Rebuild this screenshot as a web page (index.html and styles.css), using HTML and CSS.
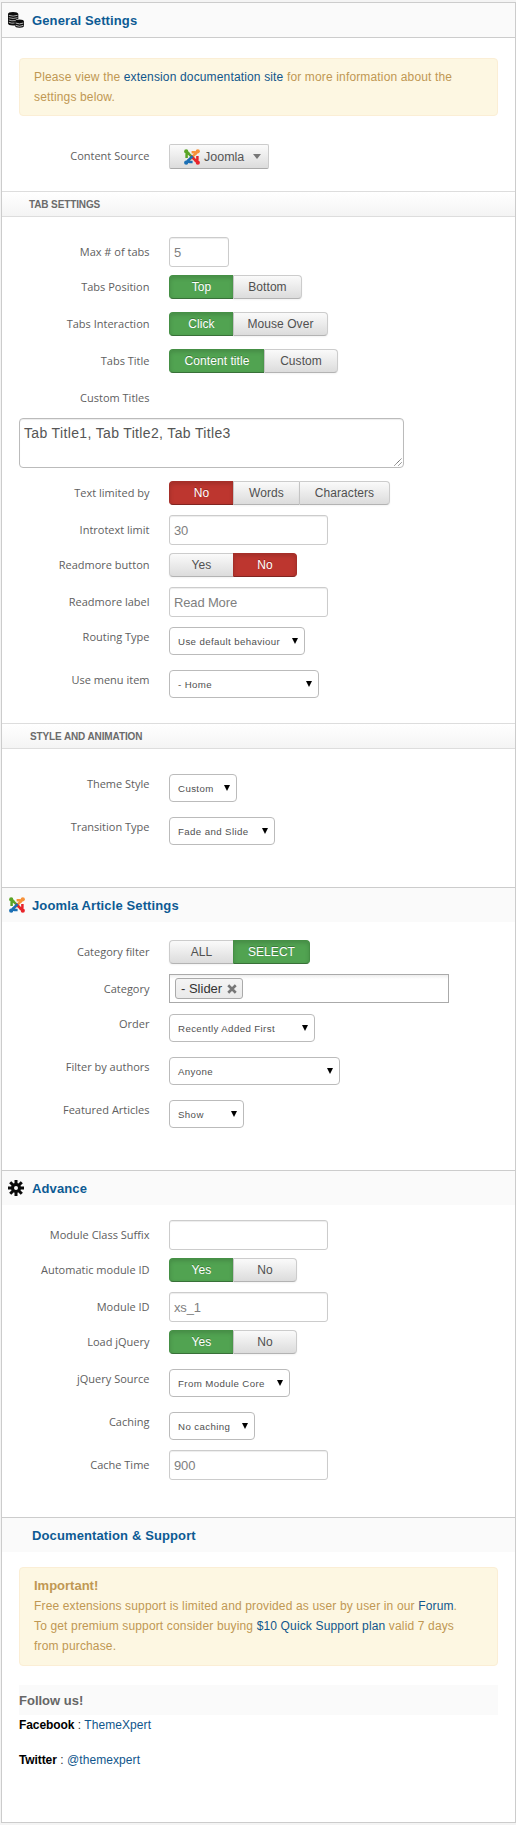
FILE: index.html
```html
<!DOCTYPE html>
<html lang="en">
<head>
<meta charset="utf-8">
<title>Module Settings</title>
<link rel="stylesheet" href="styles.css">
</head>
<body>
<svg class="defs" width="0" height="0" aria-hidden="true">
  <symbol id="joomla" viewBox="0 0 16 16">
    <g fill="none" stroke-width="2.5" stroke-linejoin="round">
      <path stroke="#5aa427" d="M2.6 9V5.6Q2.6 4 4.3 4.4L10.6 10.4"/>
      <path stroke="#f79239" d="M7.6 3.2H10.4Q12 3.2 11.6 4.7L5.4 10.8"/>
      <path stroke="#e8242a" d="M13.4 7V10.4Q13.4 12 11.7 11.6L7 7"/>
      <path stroke="#1b6fb4" d="M8.6 12.9H5.4Q4 12.9 4.3 11.4L8.6 7.1"/>
    </g>
    <circle cx="2.2" cy="2.4" r="2.1" fill="#5aa427"/>
    <circle cx="13.8" cy="2.3" r="2.1" fill="#f79239"/>
    <circle cx="13.8" cy="13.7" r="2.1" fill="#e8242a"/>
    <circle cx="2.2" cy="13.7" r="2.1" fill="#1b6fb4"/>
    <path d="M2.4 2.6L5 5" stroke="#5aa427" stroke-width="2.6"/>
    <path d="M13.6 2.6L11 5" stroke="#f79239" stroke-width="2.6"/>
    <path d="M13.6 13.4L11 11" stroke="#e8242a" stroke-width="2.6"/>
    <path d="M2.4 13.4L5 11" stroke="#1b6fb4" stroke-width="2.6"/>
  </symbol>
</svg>
<main class="panel">
  <section>
    <h2 class="section-title ruled">
      <svg class="icon" viewBox="0 0 16 16"><path d="M0 2Q0 0 5 0T10.3 2V7Q7 7.4 7 9.5V13.4Q0 13.8 0 11.5Z" fill="#0c0c0c"/><path d="M.8 3.3Q5 5 9.6 3.3M.8 5.7Q5 7.2 9.6 5.7M.8 8Q4 9.3 7 8.6M.8 10.4Q4 11.7 6.6 11" fill="none" stroke="#bbb" stroke-width=".9"/><path d="M7 9.6Q7 7.4 11.5 7.4T16 9.6V13.6Q16 15.8 11.5 15.8T7 13.6Z" fill="#0c0c0c"/><path d="M7.6 11Q11.5 12.8 15.4 11M7.6 13.4Q11.5 15.2 15.4 13.4" fill="none" stroke="#ccc" stroke-width=".9"/></svg>
      <span>General Settings</span>
    </h2>
    <div class="notice">Please view the <a>extension documentation site</a> for more information about the<br>settings below.</div>
    <div class="row source"><label>Content Source</label><button class="dropdown"><svg class="icon"><use href="#joomla"/></svg><span>Joomla</span><i></i></button></div>
    <h3 class="bar">TAB SETTINGS</h3>
    <div class="row text first-text"><label>Max # of tabs</label><div class="input short">5</div></div>
    <div class="row toggle"><label>Tabs Position</label><div class="group"><b class="green">Top</b><b class="w69">Bottom</b></div></div>
    <div class="row toggle"><label>Tabs Interaction</label><div class="group"><b class="green">Click</b><b class="w95">Mouse Over</b></div></div>
    <div class="row toggle"><label>Tabs Title</label><div class="group"><b class="green w95">Content title</b><b class="w74">Custom</b></div></div>
    <div class="row toggle"><label>Custom Titles</label></div>
    <div class="area">Tab Title1, Tab Title2, Tab Title3<svg class="grip" viewBox="0 0 8 8"><path d="M.5 7.5l7-7M4.5 7.5l3-3" stroke="#555" stroke-width="1" stroke-dasharray="1.2 .5" fill="none"/></svg></div>
    <div class="row toggle"><label>Text limited by</label><div class="group"><b class="red">No</b><b class="w66">Words</b><b class="w91">Characters</b></div></div>
    <div class="row text"><label>Introtext limit</label><div class="input">30</div></div>
    <div class="row toggle"><label>Readmore button</label><div class="group"><b>Yes</b><b class="red">No</b></div></div>
    <div class="row text"><label>Readmore label</label><div class="input">Read More</div></div>
    <div class="row select"><label>Routing Type</label><div class="pick w136">Use default behaviour<i></i></div></div>
    <div class="row select"><label>Use menu item</label><div class="pick w150">- Home<i></i></div></div>
    <h3 class="bar second">STYLE AND ANIMATION</h3>
    <div class="row select first-select"><label>Theme Style</label><div class="pick w68">Custom<i></i></div></div>
    <div class="row select"><label>Transition Type</label><div class="pick w106">Fade and Slide<i></i></div></div>
  </section>
  <section>
    <h2 class="section-title"><svg class="icon shifted"><use href="#joomla"/></svg><span>Joomla Article Settings</span></h2>
    <div class="row toggle first-toggle"><label>Category filter</label><div class="group"><b>ALL</b><b class="green w77">SELECT</b></div></div>
    <div class="row text"><label>Category</label><div class="chips"><span class="chip">- Slider<svg viewBox="0 0 8 8"><path d="M1 1l6 6M7 1L1 7" stroke="#777" stroke-width="2.1"/></svg></span></div></div>
    <div class="row select"><label>Order</label><div class="pick w146">Recently Added First<i></i></div></div>
    <div class="row select"><label>Filter by authors</label><div class="pick w171">Anyone<i></i></div></div>
    <div class="row select"><label>Featured Articles</label><div class="pick w75">Show<i></i></div></div>
  </section>
  <section>
    <h2 class="section-title"><svg class="icon" viewBox="0 0 16 16"><g stroke="#0a0a0a" stroke-width="3"><path d="M8 0V4.5M8 11.5V16M0 8H4.5M11.5 8H16M2.2 2.2L5.5 5.5M10.5 10.5L13.8 13.8M2.2 13.8L5.5 10.5M10.5 5.5L13.8 2.2"/><circle cx="8" cy="8" r="3.5" fill="none" stroke-width="3"/></g></svg><span>Advance</span></h2>
    <div class="row text advance-first"><label>Module Class Suffix</label><div class="input"></div></div>
    <div class="row toggle"><label>Automatic module ID</label><div class="group"><b class="green">Yes</b><b>No</b></div></div>
    <div class="row text"><label>Module ID</label><div class="input">xs_1</div></div>
    <div class="row toggle"><label>Load jQuery</label><div class="group"><b class="green">Yes</b><b>No</b></div></div>
    <div class="row select"><label>jQuery Source</label><div class="pick w121">From Module Core<i></i></div></div>
    <div class="row select"><label>Caching</label><div class="pick w86">No caching<i></i></div></div>
    <div class="row text"><label>Cache Time</label><div class="input">900</div></div>
  </section>
  <section>
    <h2 class="section-title"><span class="icon"></span><span>Documentation &amp; Support</span></h2>
    <div class="notice support"><h4>Important!</h4>Free extensions support is limited and provided as user by user in our <a>Forum</a>.<br>To get premium support consider buying <a>$10 Quick Support plan</a> valid 7 days<br>from purchase.</div>
    <h4 class="follow">Follow us!</h4>
    <p class="social"><strong>Facebook</strong> : <a>ThemeXpert</a></p>
    <p class="social"><strong>Twitter</strong> : <a>@themexpert</a></p>
  </section>
</main>
</body>
</html>
```
FILE: styles.css
```css
* { box-sizing: border-box; }
body { margin: 0; padding: 2px 0 2px 1px; background: #f4f4f4; font: 12px/20px "Liberation Sans", Arial, sans-serif; color: #555; }
h2, h3, h4, p { margin: 0; }
a { color: #10568c; }
.defs { position: absolute; }
.panel { width: 515px; height: 1821px; background: #fff; border: 1px solid #ccc; }
section { display: flow-root; }
section + section { border-top: 1px solid #ccc; }
section:nth-child(1) { height: 884px; }
section:nth-child(2) { height: 283px; }
section:nth-child(3) { height: 347px; }

.section-title { display: flex; align-items: center; gap: 8px; height: 34px; padding-left: 6px; background: #fafafa; font-size: 13px; letter-spacing: .12px; color: #0d5b94; }
.section-title.ruled { height: 35px; border-bottom: 1px solid #ccc; }
.section-title span { padding-top: 2px; }
.icon { width: 16px; height: 16px; flex: none; }
.icon.shifted { margin: 0 -1px 0 1px; }

.notice { margin: 20px 17px 0; width: 479px; height: 58px; padding: 8px 14px; background: #fdf7e2; border: 1px solid #fbeed5; border-radius: 4px; color: #c09853; letter-spacing: .15px; }
.notice.support { height: 99px; margin-top: 15px; line-height: 20px; }
.notice h4 { font-size: 13px; letter-spacing: 0; line-height: 20px; }
.follow { margin: 19px 17px 0; height: 30px; line-height: 31px; background: #fafafa; font-size: 13px; color: #666; }
.social { margin: 0 17px 15px; color: #333; letter-spacing: .08px; }
.social strong { color: #000; letter-spacing: -.1px; }

.row { display: grid; grid-template-columns: 147.5px 1fr; column-gap: 19.5px; }
.row label { text-align: right; font: 11px/20px "Open Sans", sans-serif; color: #606060; }
.row.source { margin-top: 28px; }
.row.source label, .toggle label { padding-top: 2px; }
.row.text { margin-top: 10px; height: 30px; }
.row.text label { padding-top: 5px; }
.row.toggle { margin-top: 13px; height: 24px; }
.row.select { margin-top: 15px; height: 28px; }
.row.text + .toggle { margin-top: 8px; }
.row.text + .select { margin-top: 10px; }
.row.first-text { margin-top: 20px; }
.row.first-select { margin-top: 25px; }
.row.first-toggle { margin-top: 18px; }
.row.advance-first { margin-top: 15px; }

.dropdown { display: flex; align-items: center; width: 100px; height: 25px; padding: 0 7px 0 14px; border: 1px solid #ccc; border-bottom-color: #aaa; border-radius: 2px; background: linear-gradient(#fbfbfb, #dcdcdc); font: 12.5px/20px "Liberation Sans", sans-serif; color: #555; }
.dropdown span { margin-left: 4px; }
.dropdown i { margin-left: auto; border: 4px solid transparent; border-top: 5px solid #777; border-bottom: 0; }

.bar { height: 26px; margin-top: 22px; padding-left: 27px; border: solid #ddd; border-width: 1px 0; background: linear-gradient(#fff, #f4f4f4); font-size: 10px; line-height: 25px; letter-spacing: -.12px; color: #6b6b6b; }
.bar.second { margin-top: 25px; padding-left: 28px; }

.input { width: 159px; height: 30px; padding: 0 4px; border: 1px solid #ccc; border-radius: 3px; box-shadow: inset 0 1px 1px rgba(0,0,0,.075); font-size: 13px; line-height: 29px; letter-spacing: -.15px; color: #808080; }
.input.short { width: 60px; }
.area { position: relative; width: 385px; height: 50px; margin: 8px 17px 0; padding: 4px; border: 1px solid #bbb; border-radius: 4px; box-shadow: inset 0 1px 1px rgba(0,0,0,.075); font-size: 14px; letter-spacing: .35px; color: #555; }
.grip { position: absolute; right: 1px; bottom: 1px; width: 8px; height: 8px; }

.group { display: flex; }
.group b { width: 64px; height: 24px; border: 1px solid #ccc; border-bottom-color: #b3b3b3; background: linear-gradient(#fafafa, #dcdcdc); font-weight: 400; line-height: 22.5px; letter-spacing: .06px; text-align: center; color: #505050; box-shadow: 0 1px 2px rgba(0,0,0,.05); }
.group b + b { border-left-color: #c4c4c4; }
.group b:not(:last-child) { border-right: 0; }
.group b:first-child { border-radius: 4px 0 0 4px; }
.group b:last-child { border-radius: 0 4px 4px 0; }
.group .w66 { width: 66px; }
.group .w69 { width: 69px; }
.group .w74 { width: 74px; }
.group .w77 { width: 77px; }
.group .w91 { width: 91px; }
.group .w95 { width: 95px; }
.group .green, .group .red { color: #fff; text-shadow: 0 -1px 0 rgba(0,0,0,.25); box-shadow: inset 0 2px 4px rgba(0,0,0,.15); }
.group .green { background: #51a351; border-color: #458f45 #458f45 #387038; }
.group .red { background: #bd362f; border-color: #a52f29 #a52f29 #802420; }

.pick { display: flex; align-items: center; justify-content: space-between; height: 28px; padding: 2px 6px 0 8px; border: 1px solid #bbb; border-radius: 4px; font-size: 9.7px; letter-spacing: .38px; color: #505050; white-space: nowrap; }
.pick i { border: 3px solid transparent; border-top: 6px solid #000; border-bottom: 0; margin-top: -3px; }
.w136 { width: 136px; }
.w150 { width: 150px; }
.w68 { width: 68px; }
.w106 { width: 106px; }
.w146 { width: 146px; }
.w171 { width: 171px; }
.w75 { width: 75px; }
.w121 { width: 121px; }
.w86 { width: 86px; }

.chips { width: 280px; height: 29px; padding: 3px 5px; border: 1px solid #aaa; background: linear-gradient(#eee, #fff 4px); }
.chip { display: flex; align-items: center; width: 68px; height: 21px; padding: 0 5px; justify-content: space-between; border: 1px solid #aaa; border-radius: 3px; background: linear-gradient(#f4f4f4, #eaeaea); font-size: 13px; color: #333; }
.chip svg { width: 10px; height: 10px; margin-top: 1px; }
```
